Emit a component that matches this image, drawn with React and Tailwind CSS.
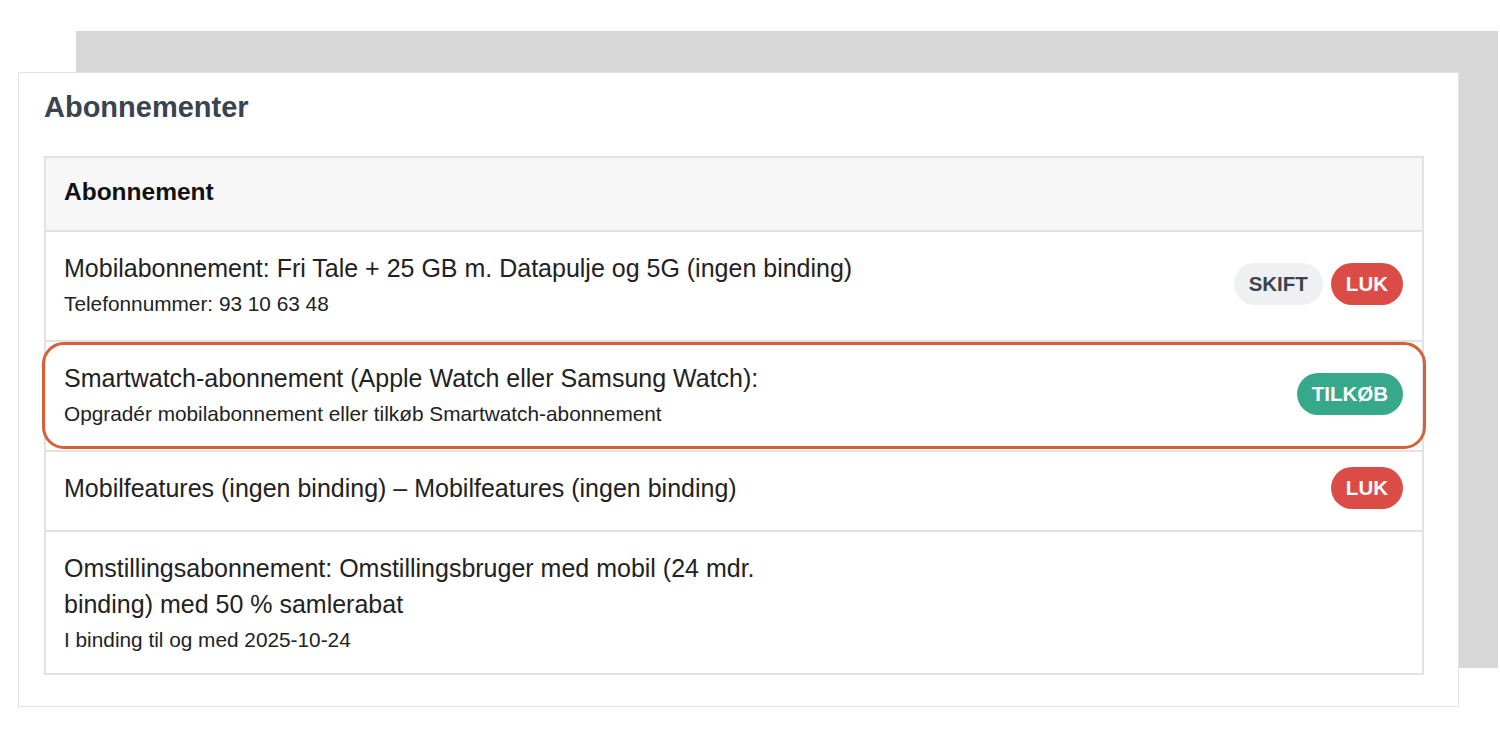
import React from "react";

const font = { fontFamily: '"Liberation Sans", Arial, sans-serif' };

function Badge({ kind, children }) {
  const cls =
    kind === "gray"
      ? "bg-[#eef0f2] text-[#3b4450]"
      : kind === "red"
      ? "bg-[#db4c47] text-white"
      : "bg-[#37a98b] text-white";
  return (
    <span
      className={`inline-flex h-[42px] items-center rounded-full px-[15px] text-[20.5px] font-bold leading-none ${cls}`}
    >
      {children}
    </span>
  );
}

function Row({ main, sub, badges, highlight, last }) {
  return (
    <div
      className={`relative flex items-center justify-between border-t-2 border-[#e2e2e2] pl-[18px] pr-[19px] pt-[18px] ${
        last ? "pb-[19px]" : sub ? "pb-[22px]" : "pb-[24px]"
      }`}
    >
      <div className="flex flex-col">
        <div className="text-[25px] leading-[36px] text-[#222]">{main}</div>
        {sub && (
          <div className="mt-[4px] text-[20.8px] leading-[28px] text-[#222]">{sub}</div>
        )}
      </div>
      {badges && <div className="-my-[4px] flex items-center gap-[8px]">{badges}</div>}
      {highlight && (
        <div className="pointer-events-none absolute left-[-4px] right-[-4px] top-[0px] bottom-[1px] rounded-[22px] border-[3px] border-[#d5603a]" />
      )}
    </div>
  );
}

export default function App() {
  return (
    <div className="w-[1500px] h-[750px] overflow-hidden bg-white pt-[31px]" style={font}>
      <div className="ml-[76px] h-[637px] w-[1422px] bg-[#d7d7d7]" />
      <div className="relative -mt-[596px] ml-[18px] w-[1441px] border border-[#e3e3e3] bg-white pl-[25px] pr-[34px] pt-[15px] pb-[31px]">
        <h2 className="mb-[30px] text-[29px] font-bold leading-[38px] text-[#3a4350]">
          Abonnementer
        </h2>
        <div className="border-2 border-[#e2e2e2]">
          <div className="bg-[#f7f7f7] pl-[18px] pt-[21px] pb-[25px] text-[24.5px] font-bold leading-[26px] text-[#111]">
            Abonnement
          </div>
          <Row
            main="Mobilabonnement: Fri Tale + 25 GB m. Datapulje og 5G (ingen binding)"
            sub="Telefonnummer: 93 10 63 48"
            badges={
              <>
                <Badge kind="gray">SKIFT</Badge>
                <Badge kind="red">LUK</Badge>
              </>
            }
          />
          <Row
            main="Smartwatch-abonnement (Apple Watch eller Samsung Watch):"
            sub="Opgradér mobilabonnement eller tilkøb Smartwatch-abonnement"
            badges={<Badge kind="green">TILKØB</Badge>}
            highlight
          />
          <Row
            main="Mobilfeatures (ingen binding) – Mobilfeatures (ingen binding)"
            badges={<Badge kind="red">LUK</Badge>}
          />
          <Row
            main={
              <>
                Omstillingsabonnement: Omstillingsbruger med mobil (24 mdr.
                <br />
                binding) med 50 % samlerabat
              </>
            }
            sub="I binding til og med 2025-10-24"
            last
          />
        </div>
      </div>
    </div>
  );
}
